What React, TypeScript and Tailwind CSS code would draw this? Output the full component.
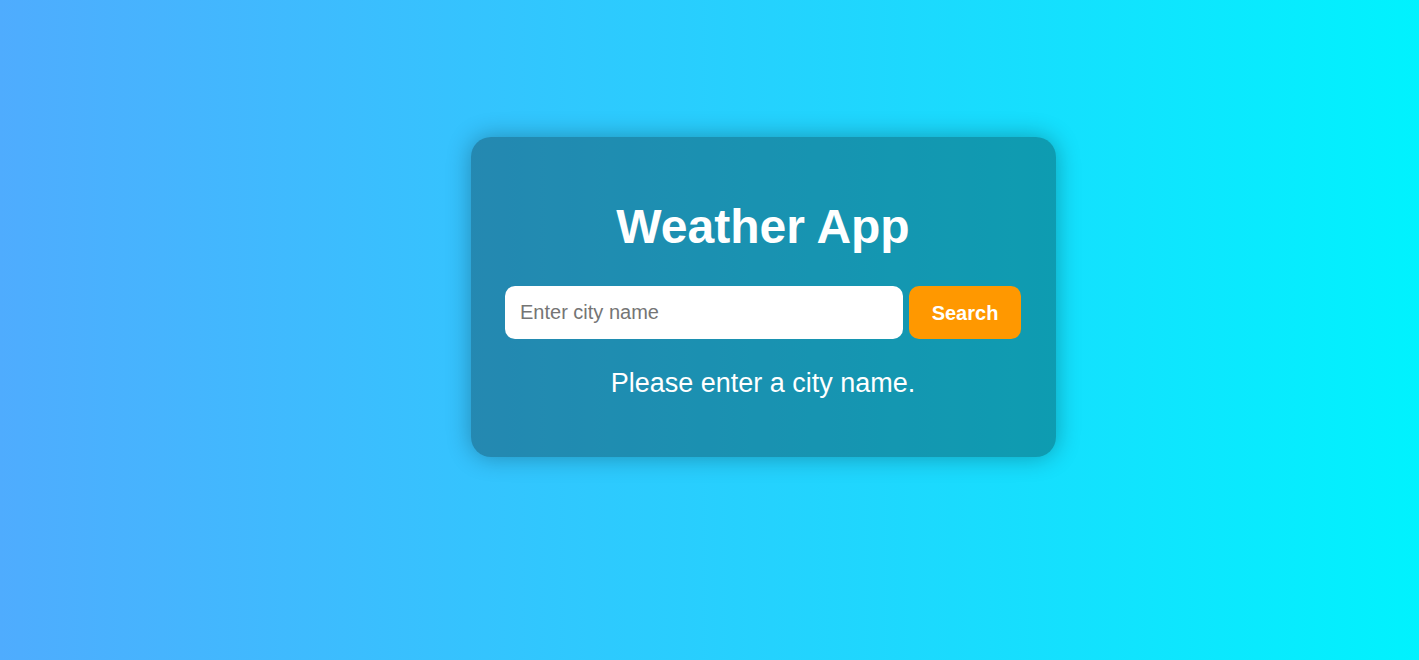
import React, { useState } from "react";

export default function App() {
  const [city, setCity] = useState("");
  return (
    <div
      className="min-h-[660px] w-full bg-[linear-gradient(to_right,#4facfe,#00f2fe)] flex justify-center items-start pt-[137px] pl-[108px]"
      style={{ fontFamily: '"Liberation Sans", Arial, sans-serif' }}
    >
      <div className="w-[585px] rounded-[20px] bg-[rgba(0,0,0,0.3)] shadow-[0_0_24px_rgba(0,0,0,0.3)] pl-[34px] pr-[35px] pt-[62px] pb-[58px] flex flex-col items-center text-white">
        <h1 className="text-[48px] leading-[55px] font-bold text-white">Weather App</h1>
        <div className="mt-[32px] flex w-full gap-[6px]">
          <input
            value={city}
            onChange={(e) => setCity(e.target.value)}
            placeholder="Enter city name"
            className="flex-1 min-w-0 h-[53px] rounded-[10px] bg-white px-[15px] text-[20px] text-[#333] placeholder:text-[#757575] outline-none"
          />
          <button className="w-[112px] h-[53px] rounded-[10px] bg-[#ff9800] text-white text-[20px] font-bold">
            Search
          </button>
        </div>
        <p className="mt-[29px] text-[27px] leading-[31px] text-white">Please enter a city name.</p>
      </div>
    </div>
  );
}
